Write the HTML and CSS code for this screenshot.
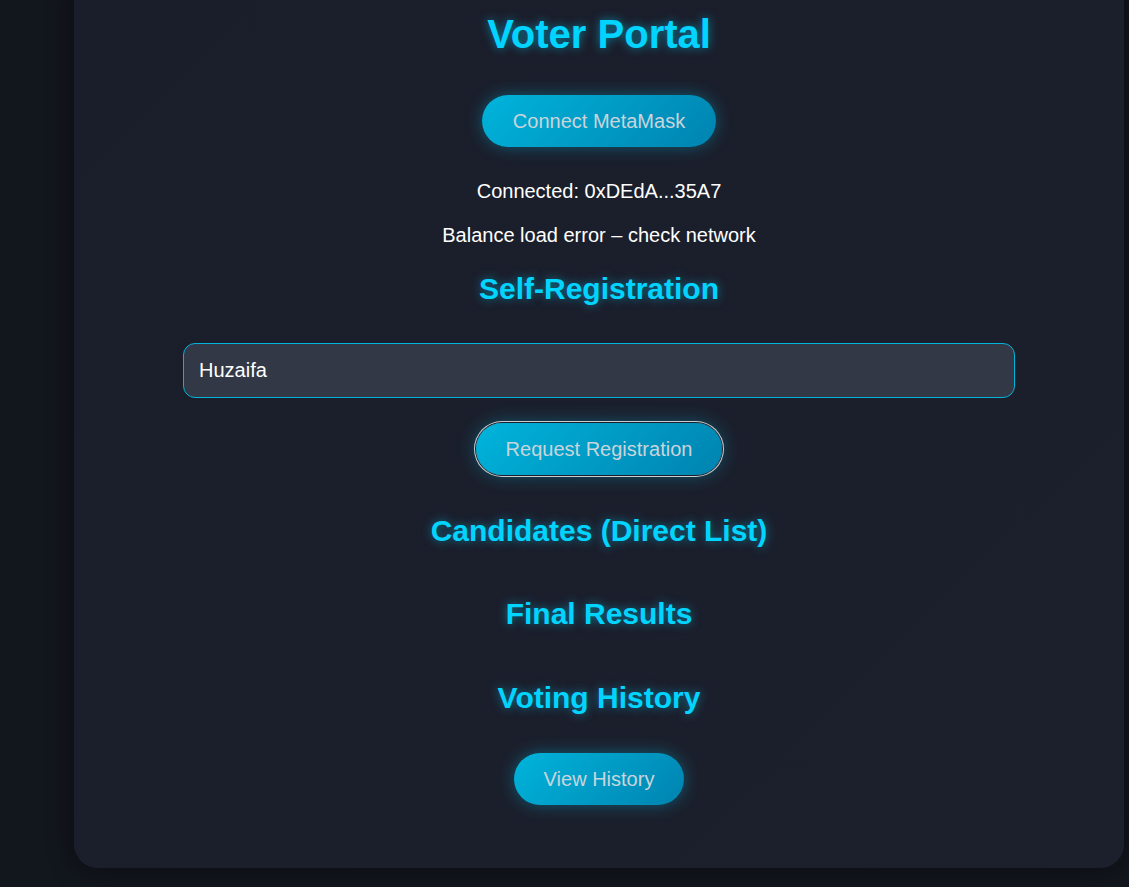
FILE: index.html
```html
<!DOCTYPE html>
<html lang="en">
<head>
<meta charset="utf-8">
<title>Voter Portal</title>
<link rel="stylesheet" href="styles.css">
</head>
<body>
<div class="page">
  <main class="card">
    <h1 class="title">Voter Portal</h1>
    <button class="btn btn-connect" type="button">Connect MetaMask</button>
    <p class="status status-account">Connected: 0xDEdA...35A7</p>
    <p class="status status-balance">Balance load error – check network</p>
    <h2 class="section section-register">Self-Registration</h2>
    <input class="name-input" type="text" value="Huzaifa">
    <button class="btn btn-request is-focused" type="button">Request Registration</button>
    <h2 class="section section-candidates">Candidates (Direct List)</h2>
    <h2 class="section section-results">Final Results</h2>
    <h2 class="section section-history">Voting History</h2>
    <button class="btn btn-history" type="button">View History</button>
  </main>
</div>
</body>
</html>
```

FILE: styles.css
```css
html, body {
  margin: 0;
  padding: 0;
}

body {
  background-color: #12161d;
  font-family: "Liberation Sans", Arial, sans-serif;
  color: #ffffff;
  min-height: 887px;
  overflow: hidden;
}

.page {
  padding: 0 5px 19px 74px;
}

.card {
  width: 1050px;
  box-sizing: border-box;
  margin-top: -30px;
  padding: 41px 25px 63px;
  background: linear-gradient(135deg, #1a1e2b 0%, #1b1f2c 60%, #1c202d 100%);
  border-radius: 24px;
  box-shadow: 0 0 28px rgba(0, 0, 0, 0.45);
  display: flex;
  flex-direction: column;
  align-items: center;
}

.title {
  margin: 0;
  font-size: 40px;
  line-height: 46px;
  font-weight: 700;
  color: #00d4ff;
  text-shadow: 0 0 10px rgba(0, 212, 255, 0.55);
}

.section {
  margin: 0;
  font-size: 30px;
  line-height: 34px;
  font-weight: 700;
  color: #00d4ff;
  text-shadow: 0 0 10px rgba(0, 212, 255, 0.5);
}

.btn {
  font-family: "Liberation Sans", Arial, sans-serif;
  font-size: 20px;
  line-height: 22px;
  padding: 15px 30px;
  border: 0;
  border-radius: 999px;
  color: #cad4db;
  background: linear-gradient(135deg, #00b4db 0%, #0083b0 100%);
  box-shadow: 0 0 16px rgba(0, 180, 219, 0.4);
  cursor: pointer;
}

.btn.is-focused {
  box-shadow: 0 0 0 1px #1b1f2b, 0 0 0 2px #c9cdd2, 0 0 18px rgba(0, 180, 219, 0.4);
}

.btn-connect {
  margin-top: 38px;
  padding-left: 31px;
  padding-right: 31px;
}

.status {
  margin: 0;
  font-size: 20px;
  line-height: 23px;
  color: #ffffff;
}

.status-account {
  margin-top: 33px;
}

.status-balance {
  margin-top: 21px;
}

.section-register {
  margin-top: 25px;
}

.name-input {
  margin-top: 37px;
  width: 832px;
  box-sizing: border-box;
  padding: 15px 15px;
  font-family: "Liberation Sans", Arial, sans-serif;
  font-size: 20px;
  line-height: 23px;
  color: #ffffff;
  background: #323845;
  border: 1px solid #00b4db;
  border-radius: 12px;
  outline: none;
}

.btn-request {
  margin-top: 25px;
}

.section-candidates {
  margin-top: 39px;
}

.section-results {
  margin-top: 49px;
}

.section-history {
  margin-top: 50px;
}

.btn-history {
  margin-top: 38px;
}
```
